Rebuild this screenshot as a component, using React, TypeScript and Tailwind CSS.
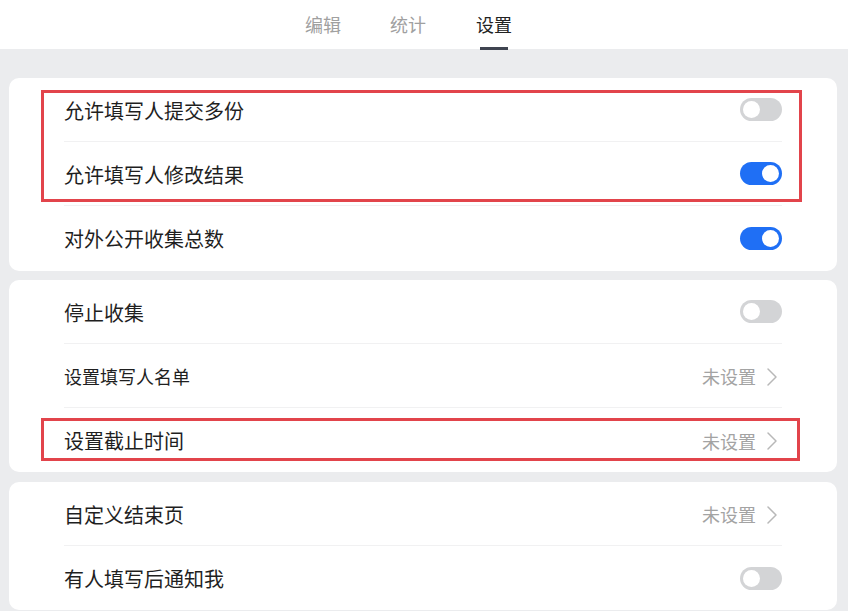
import React from 'react';

type Row = {
  label: string;
  small?: boolean;
  toggle?: boolean;
  on?: boolean;
  value?: string;
};

const Toggle = ({ on }: { on: boolean }) => (
  <div
    className={`w-[42px] h-[23px] rounded-full flex items-center px-[3px] ${
      on ? 'bg-[#1f6ff5] justify-end' : 'bg-[#d3d4d6] justify-start'
    }`}
  >
    <div className="w-[17px] h-[17px] rounded-full bg-white" />
  </div>
);

const Chevron = () => (
  <svg width="12" height="20" viewBox="0 0 12 20" fill="none">
    <path d="M2 2l8 8-8 8" stroke="#b8b8b8" strokeWidth="1.5" strokeLinecap="round" strokeLinejoin="round" />
  </svg>
);

const SettingRow = ({ row, last }: { row: Row; last: boolean }) => (
  <div className={`h-16 flex items-center justify-between ${last ? '' : 'border-b border-[#f1f1f2]'}`}>
    <span className={`${row.small ? 'text-[18px]' : 'text-[20px]'} text-[#1f1f1f] pt-[2px]`}>{row.label}</span>
    {row.toggle ? (
      <Toggle on={!!row.on} />
    ) : (
      <div className="flex items-center gap-[10px] mr-[4px] pt-[2px]">
        <span className="text-[18px] text-[#a3a3a3]">{row.value}</span>
        <Chevron />
      </div>
    )}
  </div>
);

const Card = ({ rows, children, className = '' }: { rows: Row[]; children?: React.ReactNode; className?: string }) => (
  <div className={`relative bg-white rounded-[10px] ml-[9px] mr-[11px] px-[55px] ${className}`}>
    {rows.map((r, i) => (
      <SettingRow key={r.label} row={r} last={i === rows.length - 1} />
    ))}
    {children}
  </div>
);

export default function App() {
  const font = { fontFamily: '"Noto Sans CJK SC", "Noto Sans", sans-serif' };

  return (
    <div className="w-[848px] h-[611px] overflow-hidden bg-[#ebecee]" style={font}>
      {/* tabs */}
      <div className="h-[49px] bg-white flex items-start pl-[305px] gap-[48px]">
        <div className="h-full flex items-center text-[18px] text-[#a0a0a0]">编辑</div>
        <div className="h-full flex items-center text-[18px] text-[#a0a0a0] ml-[1px]">统计</div>
        <div className="relative h-full flex items-center text-[18px] text-[#222] ml-[2px]">
          设置
          <div className="absolute left-[4px] right-[4px] bottom-[-1px] h-[3px] bg-[#3f4450]" />
        </div>
      </div>

      <div className="pt-[29px] flex flex-col">
        <Card
          className="pb-[1px]"
          rows={[
            { label: '允许填写人提交多份', toggle: true, on: false },
            { label: '允许填写人修改结果', toggle: true, on: true },
            { label: '对外公开收集总数', toggle: true, on: true },
          ]}
        >
          <div className="absolute left-[32px] top-[12px] w-[761px] h-[112px] border-[3px] border-[#e2444b] pointer-events-none" />
        </Card>

        <Card
          className="mt-[9px]"
          rows={[
            { label: '停止收集', toggle: true, on: false },
            { label: '设置填写人名单', small: true, value: '未设置' },
            { label: '设置截止时间', value: '未设置' },
          ]}
        >
          <div className="absolute left-[32px] top-[138px] w-[759px] h-[43px] border-[3px] border-[#e2444b] pointer-events-none" />
        </Card>

        <Card
          className="mt-[10px]"
          rows={[
            { label: '自定义结束页', value: '未设置' },
            { label: '有人填写后通知我', toggle: true, on: false },
          ]}
        />
      </div>
    </div>
  );
}
